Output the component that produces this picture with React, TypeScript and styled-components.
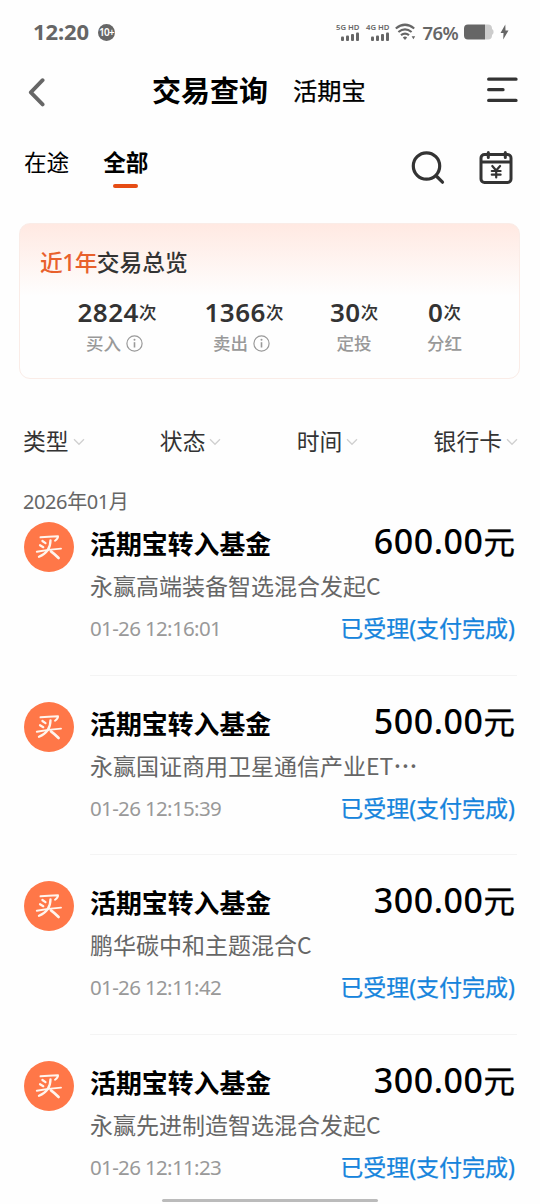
import React from "react";
import styled, { createGlobalStyle, css } from "styled-components";

const Global = createGlobalStyle`
  *, *::before, *::after { box-sizing: border-box; }
  html, body { margin: 0; padding: 0; background: #fefefe; }
  body {
    font-family: "Noto Sans", "Noto Sans CJK SC", sans-serif;
    color: #000;
    overflow: hidden;
  }
`;

const Screen = styled.div`
  position: relative;
  width: 540px;
  height: 1204px;
  overflow: hidden;
  background: #fefefe;
`;

const StatusBar = styled.div`
  height: 64px;
  padding: 0 31px 0 33px;
  display: flex;
  align-items: center;
  justify-content: space-between;
  color: #666;
`;

const StatusGroup = styled.div<{ $gap: number }>`
  display: flex;
  align-items: center;
  gap: ${(p) => p.$gap}px;
`;

const Clock = styled.span`
  font-size: 22px;
  line-height: 62px;
  font-weight: 700;
  letter-spacing: -0.1px;
  margin-top: -2px;
`;

const CountBadge = styled.span`
  width: 17px;
  height: 17px;
  border-radius: 50%;
  background: #666;
  color: #fff;
  font-size: 10px;
  line-height: 17px;
  font-weight: 600;
  text-align: center;
  letter-spacing: -0.7px;
`;

const Signal = styled.div`
  width: 24px;
  display: flex;
  flex-direction: column;
  align-items: flex-end;
  gap: 1px;
  font-size: 7.7px;
  line-height: 8px;
  font-weight: 600;
  white-space: nowrap;
  margin-top: -1px;
`;

const Battery = styled.span`
  font-size: 18.5px;
  line-height: 64px;
  font-weight: 600;
  letter-spacing: -0.6px;
  margin-top: 2px;
`;

const TitleBar = styled.header`
  height: 56px;
  padding: 0 21px 0 27px;
  display: flex;
  align-items: center;
`;

const Titles = styled.div`
  flex: 1;
  display: flex;
  align-items: center;
  gap: 25px;
  padding-left: 105px;
`;

const Title = styled.h1`
  margin: -2px 0 0;
  font-size: 29px;
  line-height: 52px;
  font-weight: 700;
`;

const Subtitle = styled.span`
  font-size: 24.2px;
  line-height: 52px;
  font-weight: 400;
  -webkit-text-stroke: 0.25px currentColor;
  margin-top: -2px;
`;

const TabBar = styled.nav`
  height: 103px;
  padding: 24px 27px 0 24px;
  display: flex;
  align-items: flex-start;
`;

const Tab = styled.div<{ $active?: boolean }>`
  display: flex;
  flex-direction: column;
  align-items: center;
  margin-right: 34px;
  font-size: 22.6px;
  line-height: 38px;
  font-weight: ${(p) => (p.$active ? 700 : 400)};
  &::after {
    content: "";
    width: 25px;
    height: 4px;
    border-radius: 2px;
    background: ${(p) => (p.$active ? "#e64c14" : "transparent")};
    margin-top: 2px;
  }
`;

const Tools = styled.div`
  margin-left: auto;
  padding-top: 6px;
  display: flex;
  gap: 33px;
`;

const Card = styled.section`
  margin: 0 20px 0 19px;
  height: 156px;
  border: 1px solid #faece7;
  border-radius: 11px;
  background: linear-gradient(180deg, #ffe9e2 0, #fefefe 72px);
  padding-top: 20px;
`;

const CardTitle = styled.h2`
  margin: 0 0 0 20px;
  font-size: 22.7px;
  line-height: 38px;
  font-weight: 500;
  color: #333;
  em {
    font-style: normal;
    color: #e8602c;
    letter-spacing: -0.5px;
  }
`;

const Stats = styled.div`
  display: grid;
  grid-template-columns: 128px 126px 94px 87px;
  padding-left: 33px;
  margin-top: 13px;
`;

const Stat = styled.div`
  display: flex;
  flex-direction: column;
  align-items: center;
`;

const StatValue = styled.div`
  font-size: 26px;
  line-height: 34px;
  font-weight: 600;
  color: #333;
  white-space: nowrap;
  display: flex;
  letter-spacing: 0.5px;
  small {
    font-size: 17.5px;
    line-height: 34px;
    font-weight: 500;
    letter-spacing: 0;
  }
`;

const StatLabel = styled.div<{ $shift: boolean }>`
  display: flex;
  align-items: center;
  gap: 5px;
  font-size: 17.5px;
  line-height: 29px;
  font-weight: 500;
  color: #999;
  margin-right: ${(p) => (p.$shift ? 5 : 0)}px;
`;

const Filters = styled.div`
  height: 60px;
  margin-top: 33px;
  padding: 0 22px 0 23px;
  display: flex;
  align-items: center;
  justify-content: space-between;
`;

const Filter = styled.div`
  display: flex;
  align-items: center;
  gap: 4px;
  font-size: 22.8px;
  line-height: 40px;
  color: #333;
`;

const Month = styled.div`
  height: 45px;
  padding-left: 23px;
  font-size: 20px;
  line-height: 60px;
  color: #666;
  letter-spacing: -0.4px;
`;

const Row = styled.article`
  height: 179.5px;
  padding: 5px 24px 0 24px;
  display: flex;
  gap: 16px;
`;

const Avatar = styled.div`
  width: 50px;
  height: 50px;
  flex: none;
  border-radius: 50%;
  background: #ff7748;
  display: grid;
  place-items: center;
`;

const Details = styled.div`
  flex: 1;
  height: 153.5px;
  border-bottom: 1px solid #f4f4f4;
  margin-right: -1px;
`;

const Line = styled.div`
  display: flex;
  justify-content: space-between;
  white-space: nowrap;
  padding-right: 2px;
`;

const RowTitle = styled.h3`
  margin: 0;
  font-size: 25.9px;
  line-height: 44px;
  font-weight: 700;
`;

const Amount = styled.div`
  height: 42px;
  font-size: 34px;
  line-height: 39px;
  font-weight: 500;
  display: flex;
  letter-spacing: 0.55px;
  span {
    font-size: 31.5px;
    letter-spacing: 0;
    font-weight: 400;
    -webkit-text-stroke: 0.3px currentColor;
  }
`;

const secondary = css`
  font-size: 23px;
  line-height: 41px;
`;

const Fund = styled.div`
  ${secondary}
  height: 43px;
  color: #666;
  white-space: nowrap;
  font-family: "Noto Sans CJK SC", sans-serif;
  margin-top: -1px;
`;

const Ellipsis = styled.span`
  font-family: "Noto Sans", sans-serif;
  font-weight: 600;
  letter-spacing: 1.6px;
  margin-left: 1px;
`;

const Time = styled.div`
  font-size: 20.5px;
  line-height: 40px;
  color: #999;
  letter-spacing: -0.65px;
`;

const State = styled.div`
  ${secondary}
  color: #1684dc;
  font-weight: 400;
  -webkit-text-stroke: 0.25px currentColor;
`;

const HomeIndicator = styled.div`
  position: absolute;
  left: 162px;
  bottom: 2px;
  width: 216px;
  height: 3px;
  border-radius: 2px;
  background: #bbb;
`;

const Bars = () => (
  <svg width="18" height="9" viewBox="0 0 18 9" fill="#666">
    <rect x="0" y="4.5" width="3" height="4.5" rx="1" />
    <rect x="5" y="3.5" width="3" height="5.5" rx="1" />
    <rect x="10" y="2" width="3" height="7" rx="1" />
    <rect x="15" y="0.5" width="3" height="8.5" rx="1" />
  </svg>
);

const Wifi = () => (
  <svg width="21" height="18" viewBox="0 0 21 18" fill="none" stroke="#666" strokeWidth="2.2">
    <path d="M.8 5.5Q10 -2 19.2 5.5" />
    <path d="M3.4 9Q10 3.6 16.6 9" />
    <path d="M6 12.2Q10 9 14 12.2" />
    <path d="M7.8 14.4Q10 12.8 12.2 14.4L10 17Z" fill="#666" stroke="none" />
    <path d="M16.6 13.2h3.6l-1.8 3z" fill="#666" stroke="none" />
  </svg>
);

const BatteryIcon = () => (
  <svg width="30" height="16" viewBox="0 0 30 16">
    <path d="M21 .5h3a4 4 0 0 1 4 4v.6q1.6.6 1.6 2.9T28 10.900v.6a4 4 0 0 1-4 4h-3z" fill="#ccc" />
    <path d="M4 .5h17v15H4a4 4 0 0 1-4-4v-7a4 4 0 0 1 4-4z" fill="#666" />
  </svg>
);

const Bolt = () => (
  <svg width="9" height="16" viewBox="0 0 9 16">
    <path d="M5.300.5L.5 9h3l-.3 6.500L8.500 6.500h-3z" fill="#666" />
  </svg>
);

const Back = () => (
  <svg width="20" height="30" viewBox="0 0 20 30" fill="none" stroke="#666" strokeWidth="3.8" strokeLinecap="round" strokeLinejoin="round">
    <path d="M15.600 3.200L3.800 15.300L15.600 27.400" />
  </svg>
);

const Menu = () => (
  <svg width="32" height="32" viewBox="0 0 32 32" fill="none" stroke="#333" strokeWidth="3.300" strokeLinecap="round">
    <path d="M1.700 3.200H29M1.700 13.700H16M1.700 24.400H29" />
  </svg>
);

const Search = () => (
  <svg width="35" height="36" viewBox="0 0 35 36" fill="none" stroke="#333" strokeWidth="3.200" strokeLinecap="round">
    <circle cx="15.500" cy="16" r="13.200" />
    <path d="M25.800 26.500L31.500 32.200" />
  </svg>
);

const Calendar = () => (
  <svg width="34" height="36" viewBox="0 0 34 36" fill="none" stroke="#333" strokeWidth="3" strokeLinecap="round">
    <rect x="2" y="4.500" width="30" height="28" rx="3.500" />
    <path d="M3 11.900H31M9.300 2.500V7.500M26.300 2.500V7.500" />
    <path d="M13.300 16L17.200 20.500L21.100 16M17.200 21V27.500M12.800 21H21.600M12.800 24.700H21.600" strokeWidth="2.200" />
  </svg>
);

const Info = () => (
  <svg width="17" height="17" viewBox="0 0 17 17" fill="none" stroke="#999">
    <circle cx="8.500" cy="8.500" r="7.600" strokeWidth="1.200" />
    <path d="M8.500 7.200V12.500" strokeWidth="1.600" />
    <circle cx="8.500" cy="4.800" r="1" fill="#999" stroke="none" />
  </svg>
);

const Chevron = () => (
  <svg width="12" height="8" viewBox="0 0 12 8" fill="none" stroke="#d0d0d0" strokeWidth="1.300">
    <path d="M1 1.200L6 6.300L11 1.200" />
  </svg>
);

const BuyMark = () => (
  <svg width="28" height="26" viewBox="0 0 28 26" fill="none" stroke="#fff5ee" strokeLinecap="round" strokeLinejoin="round">
    <path d="M5.500 3.300Q13 2.500 23 2.200Q23.300 4.500 20 6.800" strokeWidth="2" />
    <path d="M7.400 7L10.500 9.200M5 11.200L8.300 13.200" strokeWidth="2.200" />
    <path d="M1.800 17.800Q13 15.400 26 14.600" strokeWidth="1.900" />
    <path d="M15.500 6.300Q15.500 18 4 22.800" strokeWidth="2.300" />
    <path d="M16 17.400Q19.500 20 23.600 24" strokeWidth="2.600" />
  </svg>
);

const stats = [
  { value: "2824", label: "买入", info: true },
  { value: "1366", label: "卖出", info: true },
  { value: "30", label: "定投", info: false },
  { value: "0", label: "分红", info: false },
];

const records = [
  { amount: "600.00", fund: "永赢高端装备智选混合发起C", cut: false, time: "01-26 12:16:01" },
  { amount: "500.00", fund: "永赢国证商用卫星通信产业ET", cut: true, time: "01-26 12:15:39" },
  { amount: "300.00", fund: "鹏华碳中和主题混合C", cut: false, time: "01-26 12:11:42" },
  { amount: "300.00", fund: "永赢先进制造智选混合发起C", cut: false, time: "01-26 12:11:23" },
];

export default function App() {
  return (
    <Screen>
      <Global />
      <StatusBar>
        <StatusGroup $gap={9}>
          <Clock>12:20</Clock>
          <CountBadge>10+</CountBadge>
        </StatusGroup>
        <StatusGroup $gap={6}>
          <Signal>5G HD<Bars /></Signal>
          <Signal>4G HD<Bars /></Signal>
          <Wifi />
          <Battery>76%</Battery>
          <BatteryIcon />
          <Bolt />
        </StatusGroup>
      </StatusBar>
      <TitleBar>
        <Back />
        <Titles>
          <Title>交易查询</Title>
          <Subtitle>活期宝</Subtitle>
        </Titles>
        <Menu />
      </TitleBar>
      <TabBar>
        <Tab>在途</Tab>
        <Tab $active>全部</Tab>
        <Tools>
          <Search />
          <Calendar />
        </Tools>
      </TabBar>
      <Card>
        <CardTitle><em>近1年</em>交易总览</CardTitle>
        <Stats>
          {stats.map((s) => (
            <Stat key={s.label}>
              <StatValue>{s.value}<small>次</small></StatValue>
              <StatLabel $shift={s.info}>{s.label}{s.info && <Info />}</StatLabel>
            </Stat>
          ))}
        </Stats>
      </Card>
      <Filters>
        {["类型", "状态", "时间", "银行卡"].map((f) => (
          <Filter key={f}>{f}<Chevron /></Filter>
        ))}
      </Filters>
      <Month>2026年01月</Month>
      {records.map((r) => (
        <Row key={r.time}>
          <Avatar><BuyMark /></Avatar>
          <Details>
            <Line>
              <RowTitle>活期宝转入基金</RowTitle>
              <Amount>{r.amount}<span>元</span></Amount>
            </Line>
            <Fund>{r.fund}{r.cut && <Ellipsis>···</Ellipsis>}</Fund>
            <Line>
              <Time>{r.time}</Time>
              <State>已受理(支付完成)</State>
            </Line>
          </Details>
        </Row>
      ))}
      <HomeIndicator />
    </Screen>
  );
}
